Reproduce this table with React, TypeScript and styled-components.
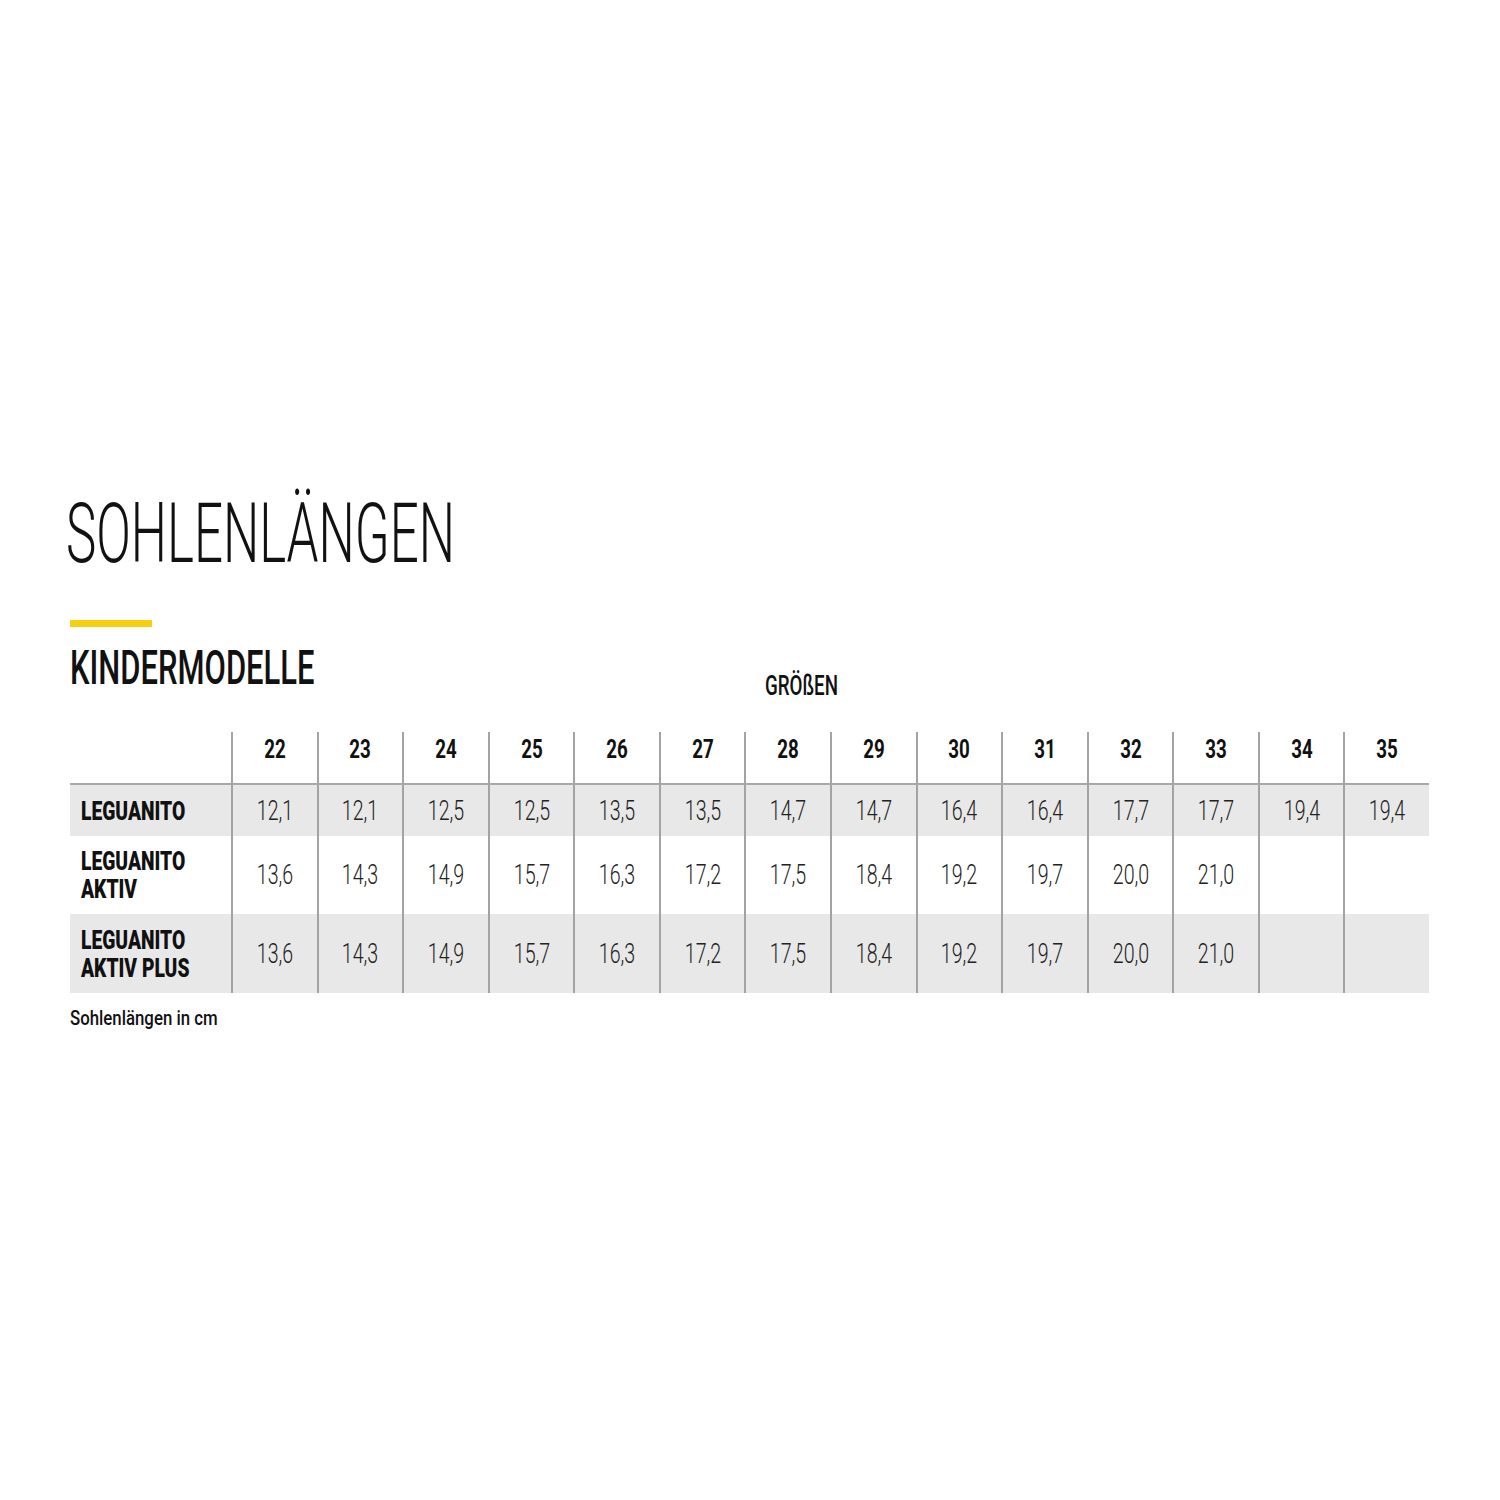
import React from "react";
import styled, { createGlobalStyle } from "styled-components";

const sizes = [22, 23, 24, 25, 26, 27, 28, 29, 30, 31, 32, 33, 34, 35];

type Model = {
  name: string[];
  lengths: string[];
  height: number;
  shaded: boolean;
};

const models: Model[] = [
  {
    name: ["LEGUANITO"],
    lengths: ["12,1", "12,1", "12,5", "12,5", "13,5", "13,5", "14,7", "14,7", "16,4", "16,4", "17,7", "17,7", "19,4", "19,4"],
    height: 51,
    shaded: true,
  },
  {
    name: ["LEGUANITO", "AKTIV"],
    lengths: ["13,6", "14,3", "14,9", "15,7", "16,3", "17,2", "17,5", "18,4", "19,2", "19,7", "20,0", "21,0", "", ""],
    height: 78,
    shaded: false,
  },
  {
    name: ["LEGUANITO", "AKTIV PLUS"],
    lengths: ["13,6", "14,3", "14,9", "15,7", "16,3", "17,2", "17,5", "18,4", "19,2", "19,7", "20,0", "21,0", "", ""],
    height: 79,
    shaded: true,
  },
];

const GlobalStyle = createGlobalStyle`
  html, body {
    margin: 0;
    padding: 0;
    background: #ffffff;
  }
  body {
    font-family: Roboto, "Liberation Sans", sans-serif;
    color: #1a1a1a;
  }
`;

// condensed look: the installed fonts are all wide, so squeeze the glyphs
const Squeeze = styled.span<{ $sx: number; $origin?: string }>`
  display: inline-block;
  white-space: nowrap;
  transform: scaleX(${({ $sx }) => $sx});
  transform-origin: ${({ $origin }) => $origin || "left"} center;
`;

const Page = styled.div`
  width: 1500px;
  height: 1500px;
  box-sizing: border-box;
  padding: 492px 0 0 66px;
`;

const Title = styled.h1`
  margin: 0;
  font-size: 83px;
  line-height: 1;
  font-weight: 300;
  color: #111;
`;

const Accent = styled.div`
  width: 82px;
  height: 7px;
  margin: 45px 0 0 4px;
  background: #f6cf0f;
`;

const SectionHead = styled.div`
  display: grid;
  grid-template-columns: 699px auto;
  align-items: start;
  margin-top: 17px;
`;

const Subtitle = styled.h2`
  margin: 0 0 0 4px;
  font-size: 48px;
  line-height: 1;
  font-weight: 500;
  color: #111;
`;

const Caption = styled.div`
  margin-top: 28px;
  font-size: 28px;
  line-height: 1;
  font-weight: 500;
  color: #111;
`;

const Table = styled.div`
  display: grid;
  grid-template-columns: 161px repeat(14, 1fr);
  width: 1359px;
  margin: 32px 0 0 4px;
`;

const HeadCell = styled.div<{ $first?: boolean }>`
  height: 53px;
  box-sizing: border-box;
  padding-top: 4px;
  text-align: center;
  font-size: 26px;
  line-height: 1;
  font-weight: 700;
  color: #111;
  border-left: ${({ $first }) => ($first ? "none" : "2px solid #a3a3a3")};
  border-bottom: 2px solid #a8a8a8;
`;

const LabelCell = styled.div<{ $h: number; $shaded: boolean }>`
  height: ${({ $h }) => $h}px;
  display: flex;
  flex-direction: column;
  justify-content: center;
  padding-left: 11px;
  background: ${({ $shaded }) => ($shaded ? "#e8e8e8" : "#ffffff")};
  font-size: 26px;
  line-height: 28px;
  font-weight: 900;
  color: #111;
`;

const ValueCell = styled.div<{ $h: number; $shaded: boolean }>`
  height: ${({ $h }) => $h}px;
  display: flex;
  align-items: center;
  justify-content: center;
  border-left: 2px solid #a3a3a3;
  background: ${({ $shaded }) => ($shaded ? "#e8e8e8" : "#ffffff")};
  font-size: 28px;
  line-height: 1;
  font-weight: 300;
  color: #222;
`;

const Footnote = styled.div`
  margin: 15px 0 0 4px;
  font-size: 20px;
  line-height: 1;
  font-weight: 500;
  color: #111;
`;

export default function App() {
  return (
    <Page>
      <GlobalStyle />
      <Title>
        <Squeeze $sx={0.615}>SOHLENLÄNGEN</Squeeze>
      </Title>
      <Accent />
      <SectionHead>
        <Subtitle>
          <Squeeze $sx={0.645}>KINDERMODELLE</Squeeze>
        </Subtitle>
        <Caption>
          <Squeeze $sx={0.67}>GRÖßEN</Squeeze>
        </Caption>
      </SectionHead>

      <Table>
        <HeadCell $first />
        {sizes.map((s) => (
          <HeadCell key={s}>
            <Squeeze $sx={0.72} $origin="center">
              {s}
            </Squeeze>
          </HeadCell>
        ))}

        {models.map((m, i) => (
          <React.Fragment key={i}>
            <LabelCell $h={m.height} $shaded={m.shaded}>
              {m.name.map((line) => (
                <Squeeze key={line} $sx={0.74}>
                  {line}
                </Squeeze>
              ))}
            </LabelCell>
            {m.lengths.map((v, j) => (
              <ValueCell key={j} $h={m.height} $shaded={m.shaded}>
                <Squeeze $sx={0.7} $origin="center">
                  {v}
                </Squeeze>
              </ValueCell>
            ))}
          </React.Fragment>
        ))}
      </Table>

      <Footnote>
        <Squeeze $sx={0.84}>Sohlenlängen in cm</Squeeze>
      </Footnote>
    </Page>
  );
}
